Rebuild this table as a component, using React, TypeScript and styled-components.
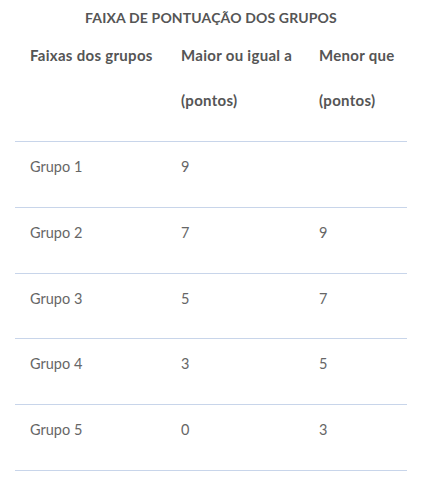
import React from 'react';
import styled, {createGlobalStyle} from 'styled-components';

const Global = createGlobalStyle`
    body{
        margin:0;
        background:#fff;
        font-family: Lato, "Open Sans", Arial, sans-serif;
    }
`;

const Wrap = styled.div`
    width:428px;
    padding:0 21px 0 15px;
    box-sizing:border-box;
`;

const Title = styled.h3`
    margin:0;
    padding-top:9px;
    text-align:center;
    font-size:14px;
    line-height:18px;
    font-weight:700;
    letter-spacing:0.15px;
    color:#555;
`;

const Table = styled.table`
    width:392px;
    table-layout:fixed;
    border-collapse:collapse;
    margin-top:6px;
`;

const Head = styled.th<{$w:number}>`
    box-sizing:border-box;
    width:${(p) => p.$w}px;
    text-align:left;
    vertical-align:top;
    padding:0 0 18px 15px;
    font-size:15px;
    letter-spacing:0.3px;
    line-height:45px;
    font-weight:700;
    color:#555;
    border-bottom:1px solid #c8d5ea;
    white-space:nowrap;
`;

const Cell = styled.td`
    text-align:left;
    vertical-align:top;
    padding:15px 0 29.75px 15px;
    font-size:14.5px;
    line-height:20px;
    color:#666;
    border-bottom:1px solid #c8d5ea;
`;

const rows = [
    ['Grupo 1', '9', ''],
    ['Grupo 2', '7', '9'],
    ['Grupo 3', '5', '7'],
    ['Grupo 4', '3', '5'],
    ['Grupo 5', '0', '3'],
];

export default function App(){
    return(
        <>
            <Global />
            <Wrap>
                <Title>FAIXA DE PONTUAÇÃO DOS GRUPOS</Title>
                <Table>
                    <thead>
                        <tr>
                            <Head $w={151}>Faixas dos grupos</Head>
                            <Head $w={138}>Maior ou igual a<br/>(pontos)</Head>
                            <Head $w={103}>Menor que<br/>(pontos)</Head>
                        </tr>
                    </thead>
                    <tbody>
                        {rows.map((r) => (
                            <tr key={r[0]}>
                                <Cell>{r[0]}</Cell>
                                <Cell>{r[1]}</Cell>
                                <Cell>{r[2]}</Cell>
                            </tr>
                        ))}
                    </tbody>
                </Table>
            </Wrap>
        </>
    )
}
